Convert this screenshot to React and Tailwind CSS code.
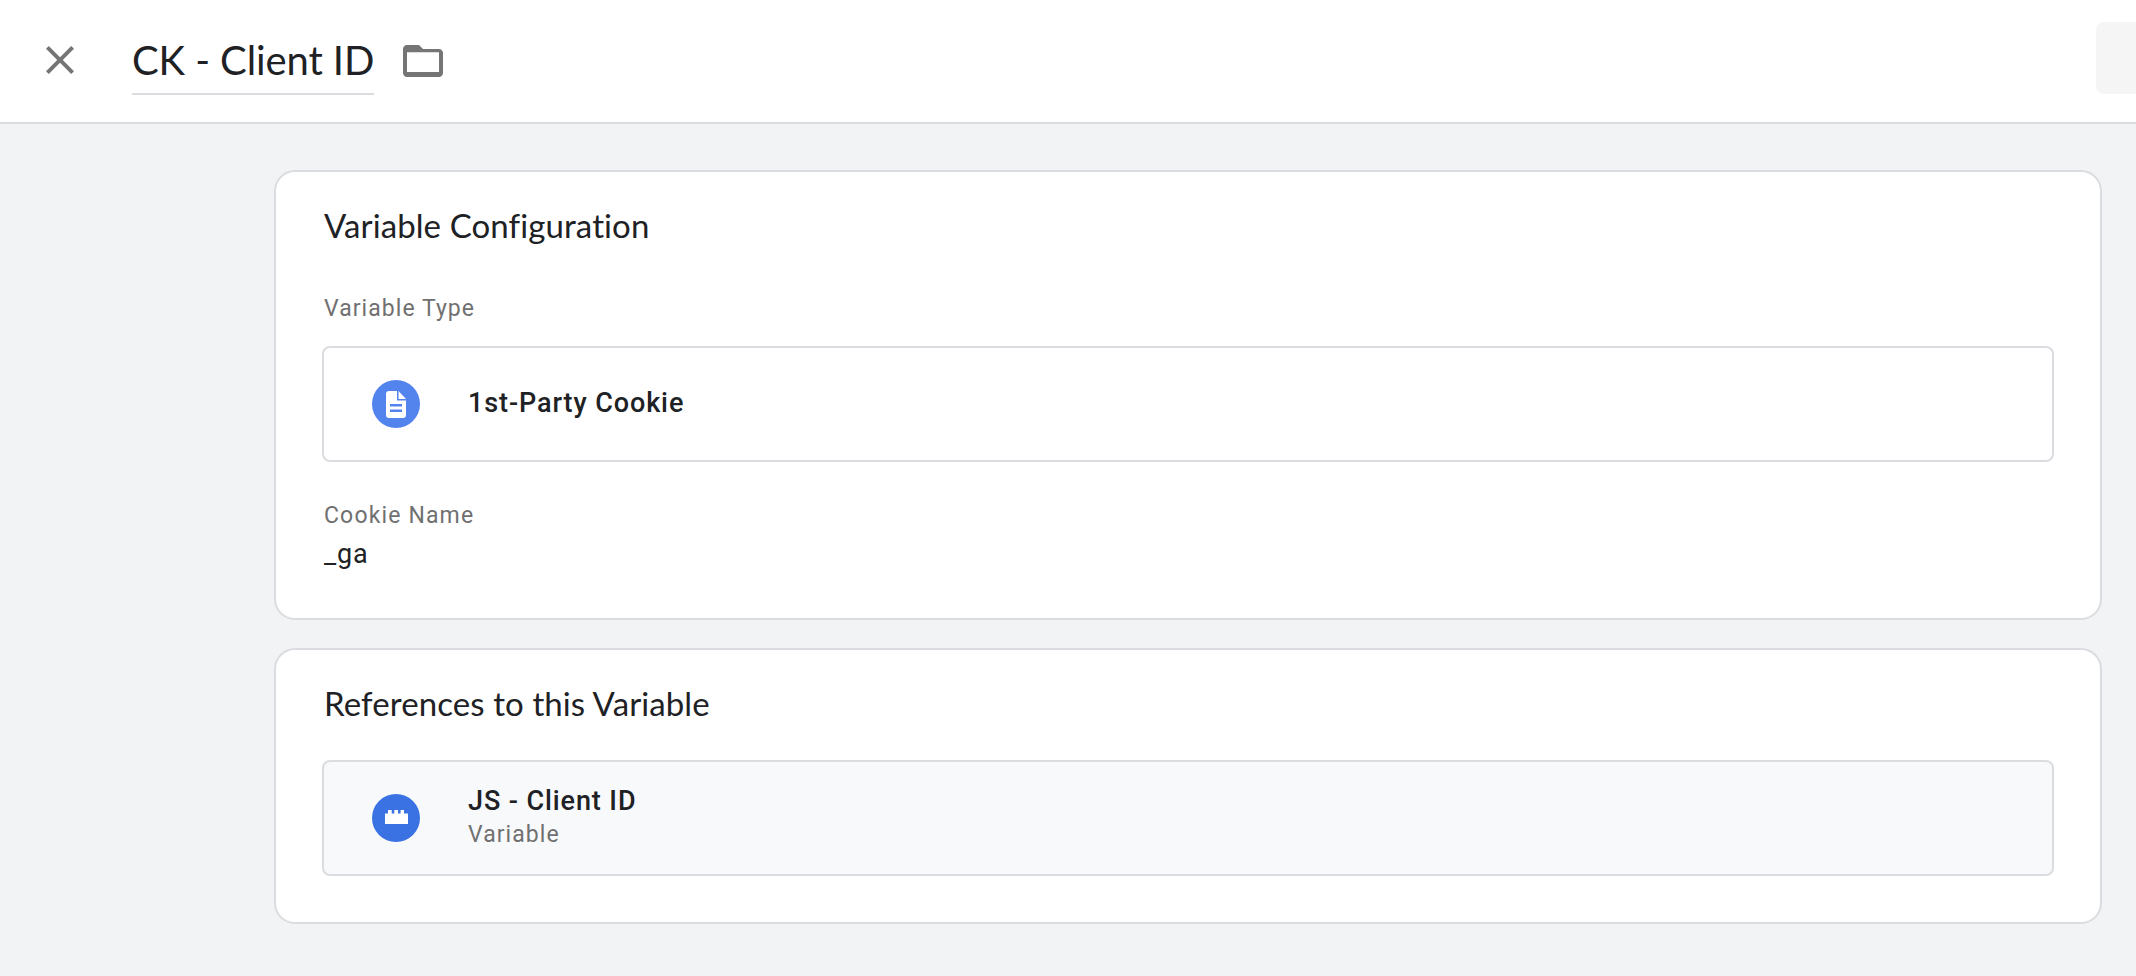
import React from 'react';

const Row = ({ icon, color, title, sub, className }) => (
  <div className={`h-[116px] border-2 border-[#dadce0] rounded-[8px] flex items-center pl-[48px] ${className}`}>
    <div className="w-[48px] h-[48px] rounded-full flex items-center justify-center shrink-0" style={{ backgroundColor: color }}>
      {icon}
    </div>
    <div className="ml-[48px] pb-[2px] flex flex-col">
      <div className="text-[27px] leading-[34px] font-medium tracking-[0.9px] text-[#202124]">{title}</div>
      {sub && <div className="mt-[2px] text-[23px] leading-[30px] tracking-[1.05px] text-[#707070]">{sub}</div>}
    </div>
  </div>
);

const DocIcon = () => (
  <svg width="20" height="27" viewBox="0 0 20 27" fill="none">
    <path d="M3 0h9.500L20 8v16a3 3 0 0 1-3 3H3a3 3 0 0 1-3-3V3a3 3 0 0 1 3-3z" fill="#fff" />
    <path d="M11.750 0v8.750H20" stroke="#5384ed" strokeWidth="1.500" fill="none" />
    <rect x="4" y="13" width="12" height="2.500" fill="#5384ed" />
    <rect x="4" y="18.500" width="12" height="2.500" fill="#5384ed" />
  </svg>
);

const BrickIcon = () => (
  <svg className="-mt-[2px]" width="23" height="14" viewBox="0 0 23 14" fill="#fff">
    <path d="M0 3.500h3V0h3.700v3.500h2.600V0h3.700v3.500h2.600V0H19v3.500h4V14H0z" />
  </svg>
);

const App = () => {
  return (
    <div className="h-screen flex flex-col bg-[#f1f3f4] overflow-hidden font-['Roboto',sans-serif] antialiased">
      <header className="h-[124px] shrink-0 bg-white border-b-2 border-[#dadce0] flex items-start pl-[36px]">
        <svg className="mt-[36px] shrink-0" width="48" height="48" viewBox="0 0 24 24" fill="#757575">
          <path d="M19 6.410L17.590 5 12 10.590 6.410 5 5 6.410 10.590 12 5 17.590 6.410 19 12 13.410 17.590 19 19 17.590 13.410 12z" />
        </svg>
        <div className="ml-[48px] mt-[36px] h-[59px] w-[242px] border-b-2 border-[#dadce0] font-['Lato',sans-serif] text-[40px] leading-[48px] tracking-[-0.1px] text-[#202124] whitespace-nowrap">
          CK - Client ID
        </div>
        <svg className="ml-[25px] mt-[37px] shrink-0" width="48" height="48" viewBox="0 0 24 24" fill="#757575">
          <path d="M20 6h-8l-2-2H4c-1.100 0-2 .9-2 2v12c0 1.100.9 2 2 2h16c1.100 0 2-.9 2-2V8c0-1.100-.9-2-2-2zm0 11.500H4V7.600h16z" />
        </svg>
        <div className="ml-auto mt-[22px] w-[40px] h-[72px] bg-[#f5f5f5] rounded-l-[8px]" />
      </header>

      <main className="flex-1 pl-[274px] pr-[34px] pt-[46px] flex flex-col gap-[28px]">
        <section className="h-[450px] bg-white border-2 border-[#dadce0] rounded-[21px] pl-[46px] pr-[46px] pt-[33px]">
          <h2 className="pl-[2px] font-['Lato',sans-serif] text-[33px] leading-[40px] tracking-[0.1px] text-[#202124]">Variable Configuration</h2>
          <div className="mt-[49px] pl-[2px] text-[23px] leading-[30px] tracking-[1.05px] text-[#707070]">Variable Type</div>
          <Row className="mt-[22px] bg-white" color="#5384ed" icon={<DocIcon />} title="1st-Party Cookie" />
          <div className="mt-[39px] pl-[2px] text-[23px] leading-[30px] tracking-[1.15px] text-[#707070]">Cookie Name</div>
          <div className="mt-[7px] pl-[2px] text-[27px] leading-[32px] tracking-[0.8px] text-[#202124]">_ga</div>
        </section>

        <section className="h-[276px] bg-white border-2 border-[#dadce0] rounded-[21px] pl-[46px] pr-[46px] pt-[33px]">
          <h2 className="pl-[2px] font-['Lato',sans-serif] text-[33px] leading-[40px] tracking-[0.1px] text-[#202124]">References to this Variable</h2>
          <Row className="mt-[37px] bg-[#f8f9fb]" color="#3b72e3" icon={<BrickIcon />} title="JS - Client ID" sub="Variable" />
        </section>
      </main>
    </div>
  );
};

export default App;
